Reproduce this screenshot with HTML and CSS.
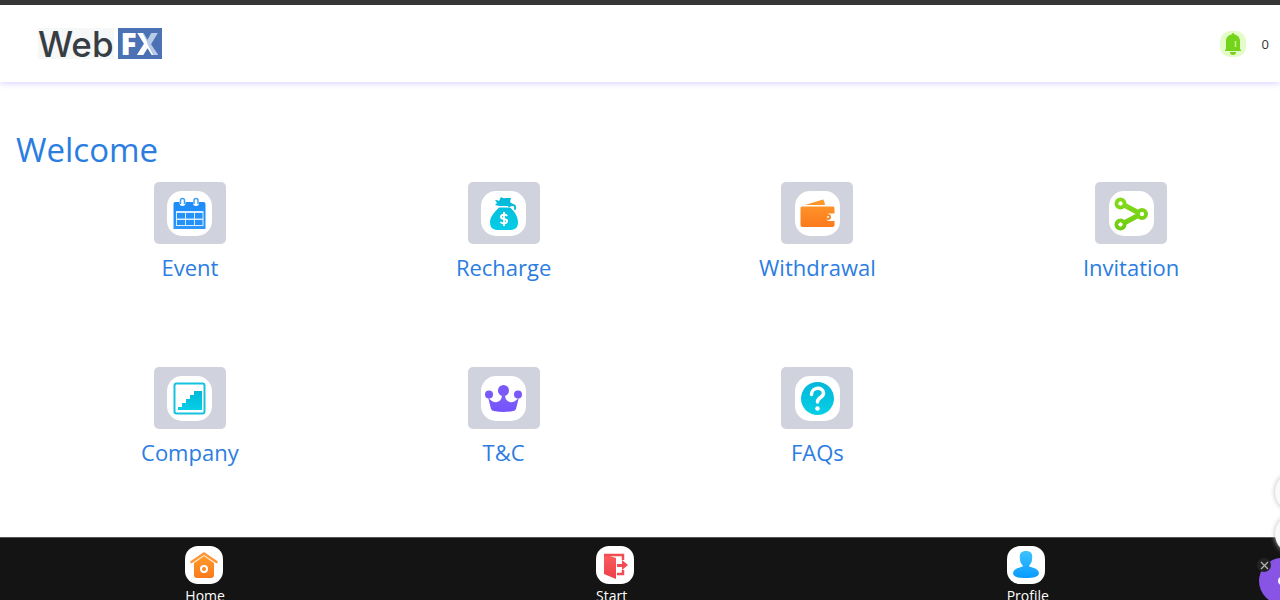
FILE: index.html
```html
<!DOCTYPE html>
<html lang="en">
<head>
<meta charset="utf-8">
<meta name="viewport" content="width=device-width, initial-scale=1">
<title>WebFX</title>
<link rel="stylesheet" href="styles.css">
</head>
<body>
<svg class="defs" aria-hidden="true">
  <defs>
    <linearGradient id="blue" x1="0" y1="0" x2="0" y2="1"><stop offset="0" stop-color="#1c8cf8"/><stop offset="1" stop-color="#2f96fb"/></linearGradient>
    <linearGradient id="cyan" x1="0" y1="0" x2="0" y2="1"><stop offset="0" stop-color="#04b7d9"/><stop offset="1" stop-color="#05cfe6"/></linearGradient>
    <linearGradient id="orange" x1="0" y1="0" x2="0" y2="1"><stop offset="0" stop-color="#ff9a2b"/><stop offset="1" stop-color="#fb7a1c"/></linearGradient>
    <linearGradient id="violet" x1="0" y1="0" x2="0" y2="1"><stop offset="0" stop-color="#8160f4"/><stop offset="1" stop-color="#7352ff"/></linearGradient>
    <linearGradient id="red" x1="0" y1="0" x2="0" y2="1"><stop offset="0" stop-color="#fb5f5f"/><stop offset="1" stop-color="#ed3f48"/></linearGradient>
    <linearGradient id="sky" x1="0" y1="0" x2="0" y2="1"><stop offset="0" stop-color="#3ec3ff"/><stop offset="1" stop-color="#089bff"/></linearGradient>
    <linearGradient id="lime" gradientUnits="userSpaceOnUse" x1="0" y1="8" x2="0" y2="38"><stop offset="0" stop-color="#86da1c"/><stop offset="1" stop-color="#6fcc10"/></linearGradient>
  </defs>
</svg>
<header class="header">
  <a class="logo" href="#" aria-label="WebFX">
    <span class="logo-web">Web</span>
    <span class="logo-fx"><span class="logo-f">F</span><span class="logo-x">X</span></span>
  </a>
  <button class="alerts" type="button" aria-label="Notifications">
    <svg class="bell" viewBox="0 0 26 26" aria-hidden="true">
      <path fill="#74d31b" d="M13 2a1.300 1.300 0 0 1 1.300 1.500C18 4 20 7 20 10v8l1 1v1H5v-1l1-1v-8c0-3 2-6 5.700-6.500A1.300 1.300 0 0 1 13 2zM10 21h6c0 2-1 3-3 3s-3-1-3-3z"/>
      <path stroke="#c7f58a" stroke-width="1.500" d="M15.500 10v6"/>
    </svg>
    <span>0</span>
  </button>
</header>
<main class="main">
  <h1 class="title">Welcome</h1>
  <div class="grid">
    <div class="item">
      <button class="tile" type="button" aria-labelledby="t-event"><svg class="icon" viewBox="0 0 45 45" aria-hidden="true">
        <path fill="url(#blue)" d="M8 11h4.500v1a3 3 0 0 0 6 0v-1h7.500v1a3 3 0 0 0 6 0v-1h4.500q2 0 2 2v25h-32V13q0-2 1.500-2z"/>
        <path fill="#d8edff" d="M9 20h27.500v15H9z"/>
        <path fill="#2492f8" d="M10 22h8v5.500h-8zM19 22h8v5.500h-8zM28 22h7.500v5.500H28zM10 29h8v5h-8zM19 29h8v5h-8zM28 29h7.500v5H28z"/>
        <path fill="none" stroke="#3c9ff8" stroke-width="1.500" d="M13.500 13V9.500a2 2 0 0 1 4 0V13M27 13V9.500a2 2 0 0 1 4 0V13"/>
      </svg></button>
      <a class="label" id="t-event" href="#">Event</a>
    </div>
    <div class="item">
      <button class="tile" type="button" aria-labelledby="t-recharge"><svg class="icon" viewBox="0 0 45 45" aria-hidden="true">
        <path fill="url(#cyan)" d="M14 9q3 0 4 1l2-4q3 2 4 1l6 0-1 4 3 2-3 2H18l-4-1 2-2zM18 16.500h11c4 3 8 9 8 14.500 0 6-3 8-8 8H17c-5 0-8-2-8-8 0-5.500 6-11.500 9-14.500z"/>
        <path fill="none" stroke="#08b9d9" stroke-width="2" stroke-linecap="round" d="M28 15c4-2 7-1 6 3"/>
        <path fill="none" stroke="#fff" stroke-width="2" d="M26 25c-1-2-6-2-6 1 0 3 6 1 6 4 0 3-5 3-6.500 1M23 21v14"/>
      </svg></button>
      <a class="label" id="t-recharge" href="#">Recharge</a>
    </div>
    <div class="item">
      <button class="tile" type="button" aria-labelledby="t-withdrawal"><svg class="icon" viewBox="0 0 45 45" aria-hidden="true">
        <path fill="url(#orange)" d="M7 15.500h31q1.500 0 1.500 2v5h-6a4 4 0 0 0 0 7.500h6v4q0 2-2 2H7.500q-2 0-2-2V17q0-1.500 1.500-1.500zM10 14l18-5.500q1 0 2 5.500z"/>
        <circle cx="33" cy="26" r="2" fill="none" stroke="#ff8620" stroke-width="2"/>
      </svg></button>
      <a class="label" id="t-withdrawal" href="#">Withdrawal</a>
    </div>
    <div class="item">
      <button class="tile" type="button" aria-labelledby="t-invitation"><svg class="icon" viewBox="0 0 45 45" aria-hidden="true">
        <g fill="none" stroke="url(#lime)"><path d="M15 14l15 8M15 32l15-8" stroke-width="5"/><g stroke-width="4"><circle cx="11.500" cy="12.500" r="4"/><circle cx="11.500" cy="33.500" r="4"/><circle cx="33" cy="23" r="4"/></g></g>
        <g fill="#fff"><circle cx="11.500" cy="12.500" r="2"/><circle cx="11.500" cy="33.500" r="2"/><circle cx="33" cy="23" r="2"/></g>
      </svg></button>
      <a class="label" id="t-invitation" href="#">Invitation</a>
    </div>
    <div class="item">
      <button class="tile" type="button" aria-labelledby="t-company"><svg class="icon" viewBox="0 0 45 45" aria-hidden="true">
        <rect x="7.500" y="7.500" width="30" height="30" rx="2" fill="none" stroke="#15c3df" stroke-width="2"/>
        <path fill="url(#cyan)" d="M11 34v-3h4v-4h4v-4h4v-4h4v-4h8v19z"/>
      </svg></button>
      <a class="label" id="t-company" href="#">Company</a>
    </div>
    <div class="item">
      <button class="tile" type="button" aria-labelledby="t-terms"><svg class="icon" viewBox="0 0 45 45" aria-hidden="true">
        <g fill="#7a58fa"><circle cx="22.500" cy="14.500" r="5.500"/><circle cx="8" cy="18.500" r="4"/><circle cx="37" cy="18.500" r="4"/></g><path fill="url(#violet)" d="M7 21c2 3 5 6 9 5 4-1 5-4 5-8h3c0 4 1 7 5 8 4 1 7-2 9-5l-3 12q-1 2-3 2-9.500 2-19 0-2 0-3-2z"/>
      </svg></button>
      <a class="label" id="t-terms" href="#">T&amp;C</a>
    </div>
    <div class="item">
      <button class="tile" type="button" aria-labelledby="t-faqs"><svg class="icon" viewBox="0 0 45 45" aria-hidden="true">
        <circle cx="22.500" cy="22.500" r="16.500" fill="url(#cyan)"/>
        <path fill="none" stroke="#fff" stroke-width="3.500" stroke-linecap="round" d="M16.500 18.500c0-8 12-8 12-1.500 0 5-6 4-6 9"/><circle cx="22.500" cy="32.500" r="2.300" fill="#fff"/>
      </svg></button>
      <a class="label" id="t-faqs" href="#">FAQs</a>
    </div>
  </div>
</main>
<nav class="nav">
  <a class="nav-link" href="#"><span class="nav-box">
    <svg class="nav-icon" viewBox="0 0 38 38" aria-hidden="true"><path fill="url(#orange)" d="M9 17l10-7 10 7v12q0 3-3 3H12q-3 0-3-3z"/><path fill="none" stroke="#ff9533" stroke-width="2.500" stroke-linecap="round" d="M6.500 16l12.500-8.500L31.500 16"/><circle cx="19" cy="23" r="3" fill="none" stroke="#fff" stroke-width="2"/></svg>
    <span>Home</span></span></a>
  <a class="nav-link" href="#"><span class="nav-box">
    <svg class="nav-icon" viewBox="0 0 38 38" aria-hidden="true"><path fill="url(#red)" d="M8 8l12 4v21L8 28z"/><path fill="none" stroke="#f14c52" stroke-width="2.500" d="M8 9h19v5M21 28h6v-4"/><path fill="#f14c52" d="M21 18h5v-4l6 5-6 5v-3h-5z"/></svg>
    <span>Start</span></span></a>
  <a class="nav-link" href="#"><span class="nav-box">
    <svg class="nav-icon" viewBox="0 0 38 38" aria-hidden="true"><path fill="url(#sky)" d="M19 5c5 0 7 3 6 8 0 4-2 5-3 7 1 2 9 1 10 7 0 4-6 5-13 5S6 31 6 27c1-6 9-5 10-7-1-2-3-3-3-7-1-5 1-8 6-8z"/></svg>
    <span>Profile</span></span></a>
</nav>
<aside class="floating" aria-label="Quick tools">
  <button class="bubble" type="button" aria-label="Tool one"></button>
  <button class="bubble" type="button" aria-label="Tool two"></button>
  <button class="chat" type="button" aria-label="Open chat"><i class="chat-mark"></i></button>
  <button class="close" type="button" aria-label="Close chat"><svg viewBox="0 0 14 14" aria-hidden="true"><path stroke="#b5b5b5" stroke-width="1.200" d="M4 4l7 7M11 4l-7 7"/></svg></button>
</aside>
</body>
</html>
```
FILE: styles.css
```css
* { box-sizing: border-box; }
body {
  margin: 0;
  height: 100vh;
  overflow: hidden;
  display: flex;
  flex-direction: column;
  background: #fff;
  border-top: 5px solid #353535;
  font-family: "Segoe UI", "Open Sans", "Noto Sans", sans-serif;
}
a { color: inherit; text-decoration: none; }
button { border: 0; padding: 0; font: inherit; cursor: pointer; }
.defs { position: absolute; width: 0; height: 0; }
.header {
  display: flex;
  align-items: center;
  justify-content: space-between;
  padding: 23px 11px 23px 38px;
  box-shadow: 0 2px 6px #dcd8ff;
}
.logo { display: flex; gap: 4px; height: 31px; line-height: 32px; }
.logo-web {
  background: #f6f7f7;
  color: #363e44;
  font-family: Inter, sans-serif;
  font-size: 35px;
  font-weight: 500;
}
.logo-fx {
  display: flex;
  justify-content: center;
  width: 44px;
  background: #4a72b4;
  font-family: "Open Sans", sans-serif;
  font-size: 30px;
  font-weight: 800;
}
.logo-f { color: #fff; }
.logo-x {
  background: linear-gradient(65deg, #fff 50%, #b9cbe6 50%);
  background-clip: text;
  color: transparent;
}
.alerts { display: flex; align-items: center; gap: 16px; background: none; color: #333; font-size: 13px; }
.bell { width: 26px; height: 26px; border-radius: 10px; background: #e3fcc9; }
.main { flex: 1 0 auto; padding: 44px 0 0 16px; color: #2b7de1; }
.title { margin: 0; font-size: 33px; font-weight: 400; line-height: 48px; }
.grid {
  display: grid;
  grid-template-columns: repeat(4, 1fr);
  row-gap: 84px;
  margin: 8px -8px 0 17px;
}
.item { display: flex; flex-direction: column; align-items: center; gap: 7px; }
.tile {
  display: flex;
  align-items: center;
  justify-content: center;
  width: 72px;
  height: 62px;
  border-radius: 5px;
  background: #d0d2dd;
}
.icon { width: 45px; height: 45px; border-radius: 15px; background: #fff; }
.label { font-size: 22px; line-height: 32px; }
.nav {
  display: flex;
  flex: 0 0 63px;
  min-height: 0;
  padding: 8px 48px 0 0;
  background: #141414;
  border-top: 1px solid #555;
  color: #fff;
  font-size: 14px;
  line-height: 20px;
}
.nav-link { flex: 1; display: flex; justify-content: center; }
.nav-box { display: flex; flex-direction: column; gap: 2px; width: 40px; }
.nav-icon { flex: none; width: 38px; height: 38px; border-radius: 13px; background: #fff; }
.floating { position: fixed; right: 0; bottom: 0; width: 24px; height: 128px; overflow: hidden; }
.bubble, .chat, .close { position: absolute; border-radius: 50%; }
.bubble { left: 19px; top: 0; width: 40px; height: 40px; background: #fafafa; box-shadow: 0 0 5px #bbb; }
.bubble + .bubble { top: 42px; }
.chat { left: 3px; top: 86px; width: 46px; height: 46px; background: #8854e6; }
.chat-mark { position: absolute; left: 19px; top: 19px; width: 8px; height: 8px; border-radius: 50%; background: #fff; }
.close { left: 1px; top: 86px; width: 14px; height: 14px; background: #222; }
.close svg { display: block; }
```
